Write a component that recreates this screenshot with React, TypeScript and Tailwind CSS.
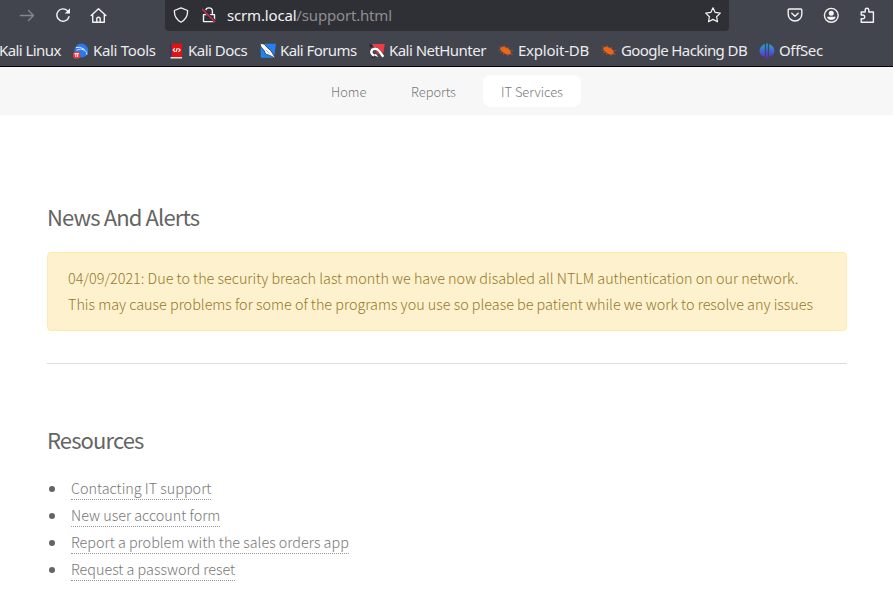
import type { ReactNode } from "react";

const sans = "font-['Noto_Sans_CJK_SC','Noto_Sans',sans-serif]";

function KaliTools() {
  return (
    <svg width="16" height="16" viewBox="0 0 16 16">
      <circle cx="8.3" cy="7.6" r="7" fill="#2a78f4" />
      <path d="M3 4.6Q7 3 11.5 6.4M3.5 7.2Q8 4.6 12 7.4Q14 9 14 11.8" fill="none" stroke="#dbe9ff" strokeWidth="1" />
      <rect x="0" y="8.4" width="7.4" height="7.4" rx="3.2" fill="#e8383d" />
      <path d="M1.5 10.6h4.4M2.8 10.6v3.4M4.7 10.6v3.4" stroke="#fff" strokeWidth="1" />
    </svg>
  );
}
function KaliDocs() {
  return (
    <svg width="16" height="16" viewBox="0 0 16 16">
      <path d="M2 1h2v13.5H2z" fill="#1d3978" />
      <path d="M3.5.5H14V14H3.5z" fill="#e01212" />
      <path d="M2.5 14h11.5v1.5H2.5z" fill="#ece6e6" />
      <path d="M6.8 5.2 5.2 7 7 8.8M7.9 9 9.3 5.2M10.4 5.4l1.8 1.7-1.8 1.8" fill="none" stroke="#fff" strokeWidth="1.2" />
    </svg>
  );
}
function KaliForums() {
  return (
    <svg width="16" height="16" viewBox="0 0 16 16">
      <path d="M.6.8H16l-2 14H.8z" fill="#2381f5" />
      <path d="M0 .3 4.4 1.2 7 4.4l3.6 3L15.8 15.4l-6-3-4.2-1.4-1.4-3.4L1 3.8z" fill="#fff" stroke="#22252b" strokeWidth=".7" />
      <path d="m5.5 6.5 4 3.8" stroke="#8c96a5" strokeWidth=".7" />
    </svg>
  );
}
function NetHunter() {
  return (
    <svg width="16" height="16" viewBox="0 0 16 16">
      <path d="M3 1h12.8l-2 12.5L8 10z" fill="#f03a44" />
      <path d="M0 .5 4 2.6 1.5 5zM2 14.5l4 .5-1-2z" fill="#24252b" />
      <path d="M5 12.6C.8 10.4 1.8 6.2 6 5.8c4-.2 5.6 4.8 8.4 8" fill="none" stroke="#24252b" strokeWidth="3.1" />
      <path d="M5 12.6C.8 10.4 1.8 6.2 6 5.8c4-.2 5.6 4.8 8.4 8" fill="none" stroke="#fff" strokeWidth="2.4" />
      <path d="M3.8 12 9.4 14 7 11" fill="#fff" />
      <path d="M6 9.2q2-.8 3 2" fill="none" stroke="#d3303a" strokeWidth="1.1" />
    </svg>
  );
}
function Bug() {
  return (
    <svg width="16" height="16" viewBox="0 0 16 16">
      <path d="M2 5Q5 2 9 5Q13.6 7 12.7 11Q9 12.6 6 10Q2.4 8 2 5Z" fill="#ef6517" />
      <path d="M.5 7l3 .3M1.4 3.6l3 1.4M6 2.4l1 2.4M10 3.8l1 2.8M12.4 8l3-.4M12 10.4l2.6 1.2M9.6 11.4l.5 2M4.4 9l-2.2.8M6 10l-.6 2" stroke="#c45a26" strokeWidth=".7" />
    </svg>
  );
}
function OffSec() {
  return (
    <svg width="16" height="16" viewBox="0 0 16 16">
      <defs><linearGradient id="offsec" gradientUnits="userSpaceOnUse" x1="0" y1="0" x2="0" y2="15"><stop stopColor="#14b4d0" /><stop offset="1" stopColor="#6a20dc" /></linearGradient></defs>
      <path d="M5.8 1v13Q.6 12.5.5 8 .6 3.4 5.8 1ZM7.2.5h1.6v15H7.2ZM10.2 1q5.2 2.4 5.3 7 0 4.5-5.3 6Z" fill="url(#offsec)" />
    </svg>
  );
}

function Bookmark({ icon, label, box, tracking }: { icon?: ReactNode; label: string; box: string; tracking: string }) {
  return (
    <div className={`flex shrink-0 items-center whitespace-nowrap ${box}`}>
      {icon && <span className="mr-1 w-4 shrink-0">{icon}</span>}
      <span className={`pb-0.5 ${tracking}`}>{label}</span>
    </div>
  );
}

function Toolbar() {
  return (
    <div className="flex h-8 items-center text-[#f3f3f5]">
      <svg className="ml-[19px] shrink-0 text-[#85868c]" width="16" height="16" viewBox="0 0 16 16" fill="none" stroke="currentColor" strokeWidth="1.4" strokeLinecap="round" strokeLinejoin="round"><path d="M1.5 7.5h13M9.5 2.5l5 5-5 5" /></svg>
      <svg className="ml-5 shrink-0" width="16" height="16" viewBox="0 0 16 16" fill="none" stroke="currentColor" strokeWidth="1.4" strokeLinecap="round"><path d="M14 8.7A6.2 6.2 0 1 1 12.6 2.9" /><path d="M15 .3v5.3H9.7z" fill="currentColor" stroke="none" /></svg>
      <svg className="ml-[19px] shrink-0" width="17" height="16" viewBox="0 0 17 16" fill="none" stroke="currentColor" strokeWidth="1.4" strokeLinecap="round" strokeLinejoin="round"><path d="M1.2 7.6 8.5.8 15.8 7.6M2.7 6.6v7.6h11.6V6.6M6.8 13.8v-3.4q0-1.2 1.7-1.2t1.7 1.2v3.4" /></svg>
      <div className="-mt-px ml-[58px] flex h-8 w-[564px] shrink-0 items-center self-start rounded-b bg-[#2f3035]">
        <svg className="ml-2 shrink-0" width="16" height="16" viewBox="0 0 16 16" fill="none" stroke="currentColor" strokeWidth="1.3" strokeLinejoin="round"><path d="M8 .8 14.6 3.5Q15 11.5 8 15.3 1 11.5 1.4 3.5Z" /></svg>
        <svg className="ml-3 shrink-0" width="16" height="16" viewBox="0 0 16 16" fill="none" stroke="currentColor" strokeWidth="1.4" strokeLinejoin="round"><path d="M4.6 7.5V4.3a3.4 3.4 0 0 1 6.8 0v3.2M2.5 7.6h11v7h-11z" /><path d="M1.3 1.7 14.5 15" stroke="#2f3035" strokeWidth="3" /><path d="M1 2 14.2 15" stroke="#e22850" strokeWidth="1.3" /></svg>
        <div className="ml-[10px] font-['Noto_Sans',sans-serif] text-[15px] tracking-[-0.17px]">scrm.local<span className="text-[#8d8e92]">/support.html</span></div>
        <svg className="mr-2 ml-auto shrink-0" width="16" height="16" viewBox="0 0 16 16" fill="none" stroke="currentColor" strokeWidth="1.2" strokeLinejoin="round"><path d="m8 .8 2.2 4.6 5.1.7-3.7 3.6.9 5.1L8 12.4l-4.5 2.4.9-5.1L.7 6.1l5.1-.7z" /></svg>
      </div>
      <svg className="mb-0.5 ml-[58px] shrink-0" width="16" height="16" viewBox="0 0 16 16" fill="none" stroke="currentColor" strokeWidth="1.4" strokeLinecap="round" strokeLinejoin="round"><path d="M2.2 2h11.6q1 0 1 1v4.2a6.8 6.8 0 0 1-13.6 0V3q0-1 1-1ZM4.8 6.2 8 9.3l3.2-3.1" /></svg>
      <svg className="mb-0.5 ml-5 shrink-0" width="16" height="16" viewBox="0 0 16 16"><circle cx="8.3" cy="8.3" r="6.9" fill="none" stroke="currentColor" strokeWidth="1.4" /><circle cx="8.3" cy="6.2" r="2.5" fill="currentColor" /><path d="M3.9 9.7h8.8Q11.8 13 8.3 13T3.9 9.7Z" fill="currentColor" /></svg>
      <svg className="mb-0.5 ml-5 shrink-0" width="16" height="16" viewBox="0 0 16 16" fill="none" stroke="currentColor" strokeWidth="1.4" strokeLinejoin="round"><path d="M2.2 8V5h4V3a1.8 1.8 0 0 1 3.6 0v2h4.6v10.3H2.2v-3.5h1.6a1.9 1.9 0 0 0 0-3.8Z" /></svg>
    </div>
  );
}

const links = ["Contacting IT support", "New user account form", "Report a problem with the sales orders app", "Request a password reset"];

export default function App() {
  return (
    <div className={`h-[605px] w-[893px] overflow-hidden bg-white ${sans}`}>
      <header className="h-[67px] border-b border-black bg-[#42454d]">
        <Toolbar />
        <div className="flex h-[38px] items-center font-['Noto_Sans',sans-serif] text-[15px] text-[#ececef]">
          <Bookmark label="Kali Linux" box="w-[73px] -ml-px mr-px" tracking="tracking-[-0.58px]" />
          <Bookmark icon={<KaliTools />} label="Kali Tools" box="w-[95px]" tracking="tracking-[-0.32px]" />
          <Bookmark icon={<KaliDocs />} label="Kali Docs" box="w-[92px]" tracking="tracking-[-0.5px]" />
          <Bookmark icon={<KaliForums />} label="Kali Forums" box="w-[109px]" tracking="tracking-[-0.57px]" />
          <Bookmark icon={<NetHunter />} label="Kali NetHunter" box="w-[129px]" tracking="tracking-[-0.54px]" />
          <Bookmark icon={<Bug />} label="Exploit-DB" box="w-[103px]" tracking="tracking-[-0.22px]" />
          <Bookmark icon={<Bug />} label="Google Hacking DB" box="w-[158px]" tracking="tracking-[-0.6px]" />
          <Bookmark icon={<OffSec />} label="OffSec" box="w-[70px]" tracking="tracking-[-0.35px]" />
        </div>
      </header>
      <nav className="flex h-12 items-center bg-[#f7f7f7] pl-[313px] text-[12.9px] font-light text-[#777]">
        <span className="w-20 pt-0.5 pl-[18px]">Home</span>
        <span className="w-[90px] pt-0.5 pl-[18px]">Reports</span>
        <span className="flex h-8 w-[98px] items-center rounded-lg bg-white pt-0.5 pl-[18px]">IT Services</span>
      </nav>
      <main className="px-[47px] pt-[83px] font-light text-[#646464]">
        <h2 className="h-[54px] text-[22px] leading-[36px] font-normal tracking-[-0.87px]">News And Alerts</h2>
        <div className="h-[79px] w-[800px] rounded border border-[#ffeaae] bg-[#fef1cd] px-5 pt-3 text-[14.36px] leading-[26px] whitespace-nowrap text-[#94782b]">
          <p>04/09/2021: Due to the security breach last month we have now disabled all NTLM authentication on our network.</p>
          <p>This may cause problems for some of the programs you use so please be patient while we work to resolve any issues</p>
        </div>
        <hr className="mt-8 w-[800px] border-[#dddddd]" />
        <h2 className="mt-[57px] h-[54px] text-[22px] leading-[36px] font-normal tracking-[-0.87px]">Resources</h2>
        <ul className="text-[14.36px] text-[#777]">
          {links.map((link) => (
            <li key={link} className="flex h-[27px] items-center">
              <span className="mr-4 ml-0.5 h-1.5 w-1.5 rounded-full bg-[#646464]" />
              <a className="h-[22px] border-b border-dotted border-[#999] leading-[20px]">{link}</a>
            </li>
          ))}
        </ul>
      </main>
    </div>
  );
}
